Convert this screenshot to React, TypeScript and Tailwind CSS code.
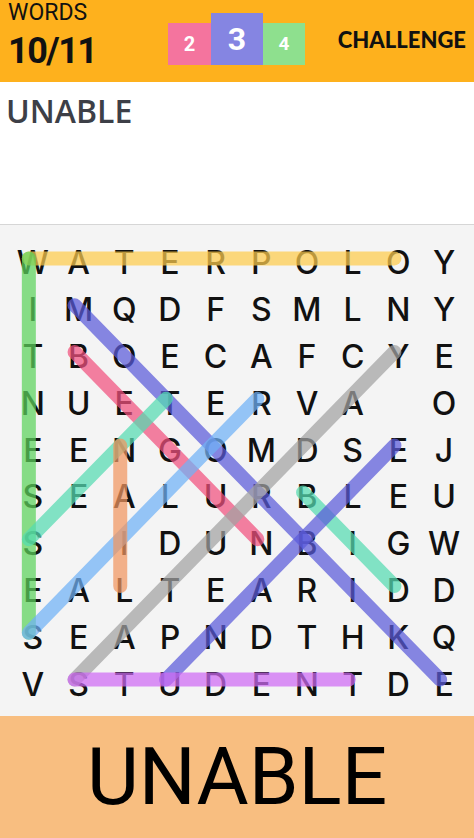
import React from 'react';

const ROWS = [
  'WATERPOLOY',
  'IMQDFSMLNY',
  'TBOECAFCYE',
  'NUETERVA O',
  'EENGOMDSEJ',
  'SEALURBLEU',
  'S IDUNBIGW',
  'EALTEARIDD',
  'SEAPNDTHKQ',
  'VSTUDENTDE',
];

const CELL_W = 45.7;
const CELL_H = 46.8;

// found words: [col1, row1, col2, row2, colour]
const LINES: [number, number, number, number, string][] = [
  [0, 0, 8, 0, '#FFCC4D'],
  [0, 0, 0, 8, '#5CD35C'],
  [1, 1, 9, 9, '#5B5BDB'],
  [1, 2, 5, 6, '#F2527F'],
  [8, 2, 1, 9, '#A3A3A3'],
  [5, 3, 0, 8, '#70B2F7'],
  [3, 3, 0, 6, '#55DCB2'],
  [6, 5, 8, 7, '#55DCB2'],
  [8, 4, 3, 9, '#5B5BDB'],
  [2, 4, 2, 7, '#F29660'],
  [1, 9, 7, 9, '#CF6AF5'],
];

function pt(c: number, r: number) {
  return [c * CELL_W + CELL_W / 2 - 4, r * CELL_H + CELL_H / 2 - 5];
}

function Header() {
  return (
    <div className="flex h-[82px] items-start bg-[#FEB11D] px-2 font-['Roboto',sans-serif]">
      <div className="flex w-[90px] flex-col">
        <span className="text-[23px] leading-[26px] text-[#111]">WORDS</span>
        <span className="mt-[5px] text-[36px] font-bold leading-[40px] tracking-[-1.5px] text-[#111]">10/11</span>
      </div>
      <div className="ml-[70px] mt-[13px] flex items-end">
        <div className="flex h-[42px] w-[43px] items-center justify-center bg-[#F4749E] text-[20px] font-bold text-white">2</div>
        <div className="flex h-[52px] w-[52px] items-center justify-center bg-[#8585E2] text-[32px] font-bold text-white">3</div>
        <div className="flex h-[42px] w-[42px] items-center justify-center bg-[#8EE08E] text-[19px] font-bold text-white">4</div>
      </div>
      <span className="ml-auto mt-[27px] font-['Lato',sans-serif] text-[22px] font-black leading-[26px] text-[#111]">CHALLENGE</span>
    </div>
  );
}

function Board() {
  return (
    <div className="h-[491px] bg-[#F4F4F4] pl-[10px] pt-[15px]">
      <div className="relative w-[457px]">
        <div className="grid grid-cols-[repeat(10,45.7px)] grid-rows-[repeat(10,46.8px)] font-['Inter',sans-serif] text-[32px] font-medium text-[#111]">
          {ROWS.flatMap((row, r) =>
            row.split('').map((ch, c) => (
              <div key={`${r}-${c}`} className="flex items-center justify-center leading-none">
                {ch.trim()}
              </div>
            )),
          )}
        </div>
        <svg className="absolute left-0 top-0" width="457" height="468" viewBox="0 0 457 468">
          {LINES.map(([c1, r1, c2, r2, color], i) => {
            const [x1, y1] = pt(c1, r1);
            const [x2, y2] = pt(c2, r2);
            return (
              <line
                key={i}
                x1={x1}
                y1={y1}
                x2={x2}
                y2={y2}
                stroke={color}
                strokeWidth={14}
                strokeLinecap="round"
                opacity={0.72}
              />
            );
          })}
        </svg>
      </div>
    </div>
  );
}

export default function App() {
  return (
    <div className="flex h-[838px] w-[474px] flex-col overflow-hidden bg-white">
      <Header />
      <div className="h-[143px] border-b border-[#D6D6D6] bg-white px-[6px] pt-[9px]">
        <span className="font-['Open_Sans',sans-serif] text-[32px] font-semibold leading-[40px] text-[#3D3F47]">UNABLE</span>
      </div>
      <Board />
      <div className="flex flex-1 items-center justify-center bg-[#F8BE80]">
        <span className="font-['Roboto',sans-serif] text-[80px] leading-none text-black">UNABLE</span>
      </div>
    </div>
  );
}
